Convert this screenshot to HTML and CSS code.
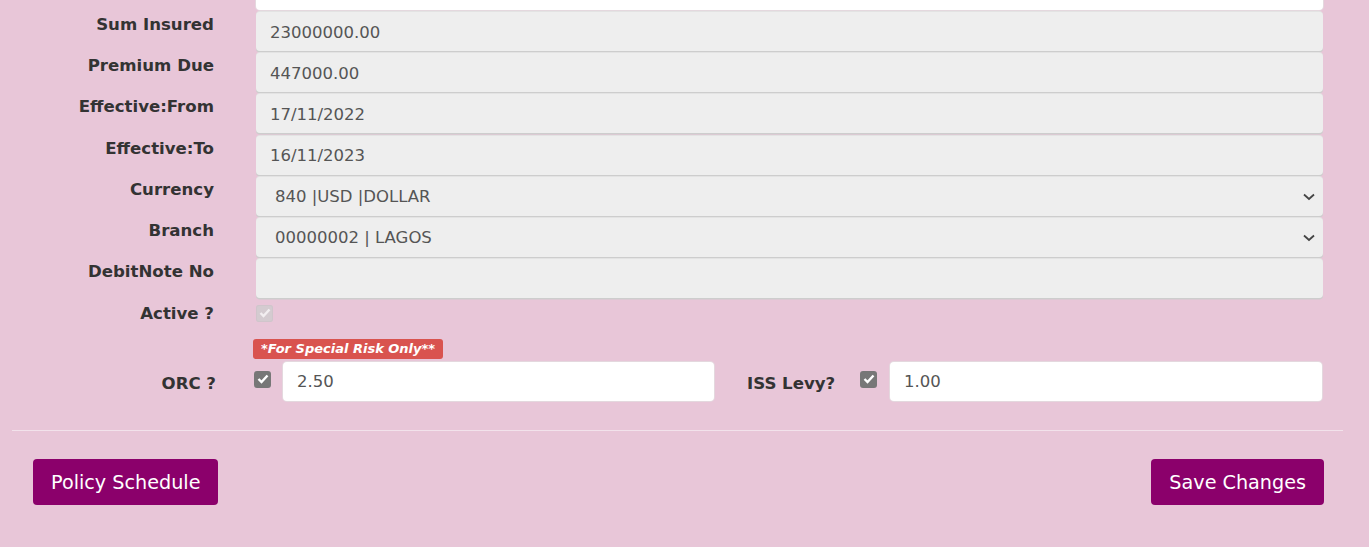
FILE: index.html
```html
<!DOCTYPE html>
<html>
<head>
<meta charset="utf-8">
<link rel="stylesheet" href="styles.css">
</head>
<body>
<div class="page">
  <form class="form">
    <div class="row row-cut">
      <div class="label"></div>
      <div class="field"><div class="input input-white input-cut"></div></div>
    </div>
    <div class="row">
      <label class="label">Sum Insured</label>
      <div class="field"><div class="input">23000000.00</div></div>
    </div>
    <div class="row">
      <label class="label">Premium Due</label>
      <div class="field"><div class="input">447000.00</div></div>
    </div>
    <div class="row">
      <label class="label">Effective:From</label>
      <div class="field"><div class="input">17/11/2022</div></div>
    </div>
    <div class="row">
      <label class="label">Effective:To</label>
      <div class="field"><div class="input">16/11/2023</div></div>
    </div>
    <div class="row">
      <label class="label">Currency</label>
      <div class="field"><div class="input select"><span>840 |USD |DOLLAR</span>
        <svg class="chev" width="12" height="8" viewBox="0 0 12 8"><path d="M1 1.5 L6 6 L11 1.5" fill="none" stroke="#444" stroke-width="1.8"/></svg></div></div>
    </div>
    <div class="row">
      <label class="label">Branch</label>
      <div class="field"><div class="input select"><span>00000002 | LAGOS</span>
        <svg class="chev" width="12" height="8" viewBox="0 0 12 8"><path d="M1 1.5 L6 6 L11 1.5" fill="none" stroke="#444" stroke-width="1.8"/></svg></div></div>
    </div>
    <div class="row">
      <label class="label">DebitNote No</label>
      <div class="field"><div class="input"></div></div>
    </div>
    <div class="row row-check">
      <label class="label">Active ?</label>
      <div class="field"><span class="check check-disabled"><svg width="12" height="10" viewBox="0 0 12 10"><path d="M1.5 5 L4.5 8 L10.5 1.5" fill="none" stroke="#fff" stroke-width="2.4"/></svg></span></div>
    </div>
    <div class="badge-row">
      <span class="badge">*For Special Risk Only**</span>
    </div>
    <div class="row row-pair">
      <label class="label label-center">ORC ?</label>
      <div class="pair">
        <span class="check"><svg width="12" height="10" viewBox="0 0 12 10"><path d="M1.5 5 L4.5 8 L10.5 1.5" fill="none" stroke="#fff" stroke-width="2.4"/></svg></span>
        <div class="input input-white input-orc">2.50</div>
        <label class="label-inline">ISS Levy?</label>
        <span class="check"><svg width="12" height="10" viewBox="0 0 12 10"><path d="M1.5 5 L4.5 8 L10.5 1.5" fill="none" stroke="#fff" stroke-width="2.4"/></svg></span>
        <div class="input input-white input-iss">1.00</div>
      </div>
    </div>
  </form>
  <hr class="divider">
  <div class="actions">
    <button class="btn" type="button">Policy Schedule</button>
    <button class="btn" type="button">Save Changes</button>
  </div>
</div>
</body>
</html>
```
FILE: styles.css
```css
html, body {
  margin: 0;
  padding: 0;
  background: #e8c6d8;
}
body {
  font-family: "DejaVu Sans", Verdana, sans-serif;
  color: #333;
  height: 547px;
  overflow: hidden;
}
.page {
  padding: 0 12px 0 12px;
}
.form {
  display: flex;
  flex-direction: column;
}
.row {
  display: flex;
  align-items: flex-start;
  margin-bottom: 2.2px;
}
.row-cut {
  height: 10px;
  margin-bottom: 2px;
}
.label {
  width: 202px;
  flex: none;
  text-align: right;
  font-weight: bold;
  font-size: 16.6px;
  line-height: 20px;
  padding-top: 3px;
  color: #333;
}
.field {
  margin-left: 42px;
  width: 1067px;
}
.input {
  box-sizing: border-box;
  height: 39px;
  background: #eeeeee;
  border-radius: 4px;
  box-shadow: 0 1.5px 0 #cdcdcd, 0 -1px 0 #e3e3e3;
  font-size: 16.5px;
  color: #555;
  padding: 2px 14px 0 14px;
  display: flex;
  align-items: center;
  line-height: 20px;
}
.input-white {
  background: #fff;
  box-shadow: 0 0 0 1px #e4d8de;
}
.input-cut {
  height: 10px;
  border-radius: 0 0 4px 4px;
}
.select {
  justify-content: space-between;
  padding-left: 19px;
  padding-right: 8px;
}
.chev {
  display: block;
}
.row-check {
  height: 28px;
  margin-top: 2px;
}
.row-check .label {
  padding-top: 2px;
}
.row-check .field {
  padding-top: 1px;
}
.check {
  display: inline-flex;
  align-items: center;
  justify-content: center;
  width: 17px;
  height: 17px;
  border-radius: 3px;
  background: #777;
  flex: none;
}
.check-disabled {
  background: #d4cbd0;
  box-shadow: inset 0 0 0 1px #d0c5cb;
}
.check-disabled svg path {
  stroke: #f2eef0;
}
.badge-row {
  padding-left: 241px;
  margin-top: 5px;
  height: 21px;
}
.badge {
  display: inline-block;
  background: #d9534f;
  color: #fff;
  font-weight: bold;
  font-style: italic;
  font-size: 13px;
  line-height: 20px;
  padding: 0 8px;
  border-radius: 3px;
}
.row-pair {
  margin-top: 3px;
  align-items: center;
}
.label-center {
  padding-top: 6px;
  width: 204px;
}
.pair {
  display: flex;
  align-items: center;
  margin-left: 38px;
}
.pair .check {
  margin-top: -4px;
}
.input-orc {
  width: 431px;
  margin-left: 12px;
}
.label-inline {
  font-weight: bold;
  font-size: 16.6px;
  line-height: 20px;
  padding-top: 6px;
  margin-left: 33px;
  width: 91px;
  color: #333;
  white-space: nowrap;
}
.pair .label-inline + .check {
  margin-left: 22px;
}
.input-iss {
  width: 432px;
  margin-left: 13px;
}
.divider {
  border: 0;
  border-top: 1px solid #f2e2eb;
  margin: 27px 14px 0 0;
  width: 1331px;
}
.actions {
  display: flex;
  justify-content: space-between;
  padding: 28px 33px 0 21px;
}
.btn {
  font-family: "DejaVu Sans", Verdana, sans-serif;
  font-size: 19.2px;
  color: #fff;
  background: #8b006b;
  border: 0;
  border-radius: 4px;
  height: 46px;
  padding: 2px 18px 0 18px;
}
```
